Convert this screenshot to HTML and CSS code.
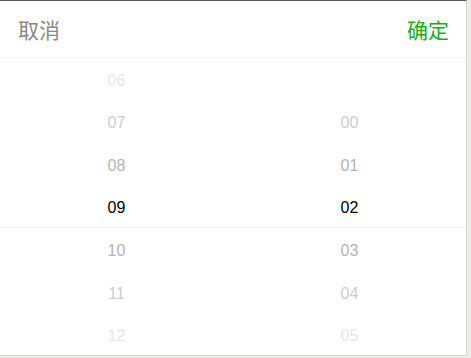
FILE: index.html
```html
<!DOCTYPE html>
<html lang="zh-CN">
<head>
    <meta charset="UTF-8">
    <meta name="viewport" content="width=device-width, initial-scale=1.0">
    <title>时间选择</title>
    <link rel="stylesheet" href="styles.css">
</head>
<body>
    <!-- Time picker sheet -->
    <div class="picker">
        <div class="picker-header">
            <span class="btn cancel">取消</span>
            <span class="btn confirm">确定</span>
        </div>

        <div class="picker-body">
            <!-- Hours -->
            <div class="column">
                <div class="item far">06</div>
                <div class="item mid">07</div>
                <div class="item near">08</div>
                <div class="item selected">09</div>
                <div class="item near">10</div>
                <div class="item mid">11</div>
                <div class="item far">12</div>
            </div>

            <!-- Minutes -->
            <div class="column">
                <div class="item far"></div>
                <div class="item mid">00</div>
                <div class="item near">01</div>
                <div class="item selected">02</div>
                <div class="item near">03</div>
                <div class="item mid">04</div>
                <div class="item far">05</div>
            </div>
        </div>
    </div>
</body>
</html>
```

FILE: styles.css
```css
/* General styles */
body {
    margin: 0;
    padding: 0;
    height: 100vh;
    overflow: hidden;
    background: #ececE8;
    font-family: "Liberation Sans", Arial, "Noto Sans CJK SC", sans-serif;
}

/* Picker sheet */
.picker {
    width: 466px;
    height: 354px;
    background: #fff;
    border-top: 1px solid #5a5a5a;
    border-right: 1px solid #d6d6d2;
    border-bottom: 1px solid #d6d6d2;
    display: flex;
    flex-direction: column;
}

.picker-header {
    height: 56px;
    border-bottom: 1px solid #f2f2f2;
    display: flex;
    justify-content: space-between;
    align-items: center;
    padding: 0 17px 0 18px;
}

.btn {
    font-family: "Noto Sans CJK SC", sans-serif;
    font-size: 21px;
    line-height: 1;
}

.cancel {
    color: #888;
}

.confirm {
    color: #1aad19;
}

/* Wheels */
.picker-body {
    flex: 1;
    display: flex;
}

.column {
    flex: 1;
    display: flex;
    flex-direction: column;
}

.item {
    flex: 1;
    display: flex;
    justify-content: center;
    align-items: center;
    padding-top: 4px;
    font-size: 16px;
    color: #b3b3b3;
}

.item.selected {
    color: #000;
    border-bottom: 1px solid #f2f2f2;
}

.item.near {
    color: #b4b4b4;
}

.item.mid {
    color: #cdcdcd;
}

.item.far {
    color: #e6e6e6;
}
```
